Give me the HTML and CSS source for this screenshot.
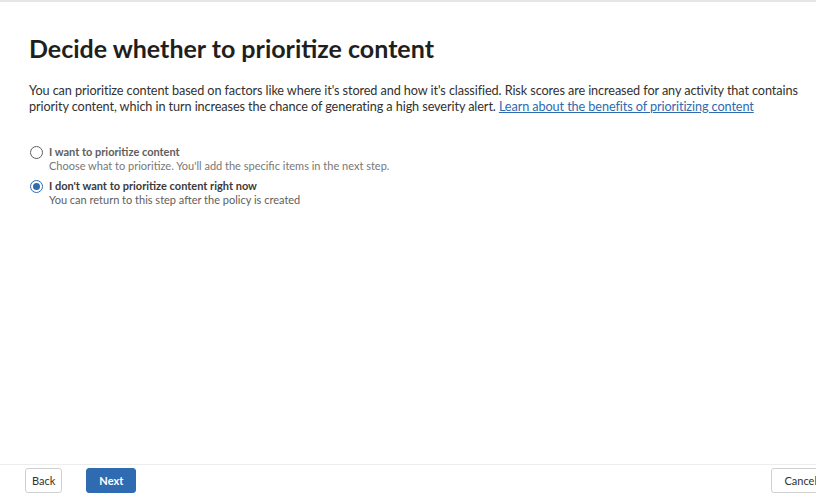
FILE: index.html
```html
<!DOCTYPE html>
<html lang="en">
<head>
  <meta charset="UTF-8" />
  <meta name="viewport" content="width=device-width, initial-scale=1.0"/>
  <title>Prioritize content</title>
  <link rel="stylesheet" href="styles.css">
</head>
<body>
  <div class="page">
    <main class="content">
      <h1>Decide whether to prioritize content</h1>
      <p class="intro">You can prioritize content based on factors like where it's stored and how it's classified. Risk scores are increased for any activity that contains priority content, which in turn increases the chance of generating a high severity alert. <a href="#">Learn about the benefits of prioritizing content</a></p>

      <div class="choices">
        <label class="choice">
          <input type="radio" name="prio" value="yes" />
          <span class="dot"></span>
          <span class="text">
            <span class="title">I want to prioritize content</span>
            <span class="desc">Choose what to prioritize. You'll add the specific items in the next step.</span>
          </span>
        </label>
        <label class="choice">
          <input type="radio" name="prio" value="no" checked />
          <span class="dot"></span>
          <span class="text">
            <span class="title">I don't want to prioritize content right now</span>
            <span class="desc">You can return to this step after the policy is created</span>
          </span>
        </label>
      </div>
    </main>

    <footer class="actions">
      <button class="btn">Back</button>
      <button class="btn primary">Next</button>
      <span class="spacer"></span>
      <button class="btn cancel">Cancel</button>
    </footer>
  </div>
</body>
</html>
```

FILE: styles.css
```css
html, body { margin:0; padding:0; height:100%; background:#fff;}
body { font-family: Lato, "Open Sans", sans-serif; color:#323130; overflow:hidden;}
.page { width:832px; height:496px; display:flex; flex-direction:column; border-top:2px solid #e6e6e6; box-sizing:border-box;}
.content { flex:1; padding:31px 20px 0 29px;}
h1 { font-size:25px; font-weight:700; margin:0 0 19px; color:#201f1e; line-height:30px;}
.intro { font-size:12.7px; letter-spacing:-0.1px; line-height:16px; margin:0 0 31px; color:#323130;}
.intro a { color:#2f6bb0; text-decoration:underline;}
.choices { display:flex; flex-direction:column; gap:6px; padding-left:1px;}
.choice { display:flex; align-items:flex-start; gap:6px; cursor:pointer;}
.choice input { display:none;}
.dot { width:11px; height:11px; border:1px solid #605e5c; border-radius:50%; margin-top:1px; box-sizing:content-box; position:relative; flex:none;}
.choice input:checked + .dot { border-color:#2f6bb0;}
.choice input:checked + .dot::after { content:""; position:absolute; left:2px; top:2px; width:7px; height:7px; border-radius:50%; background:#2f6bb0;}
.text { display:flex; flex-direction:column;}
.title { font-size:11px; font-weight:700; line-height:14px; color:#605e5c;}
.choice input:checked ~ .text .title { color:#3b3a39;}
.desc { font-size:11px; line-height:14px; color:#797775;}
.choice input:checked ~ .text .desc { color:#605e5c;}
.actions { display:flex; align-items:center; gap:24px; border-top:1px solid #ededed; padding:3px 2px 3px 25px; height:32px; box-sizing:border-box;}
.spacer { flex:1;}
.btn { font-family:inherit; font-size:11px; font-weight:400; height:25px; padding:0 6px; background:#fff; color:#323130; border:1px solid #d0d0d0; border-radius:3px;}
.btn.primary { background:#2f6bb0; border-color:#2f6bb0; color:#fff; font-weight:700; padding:0 12px;}
.btn.cancel { padding:0 12px;}
```
